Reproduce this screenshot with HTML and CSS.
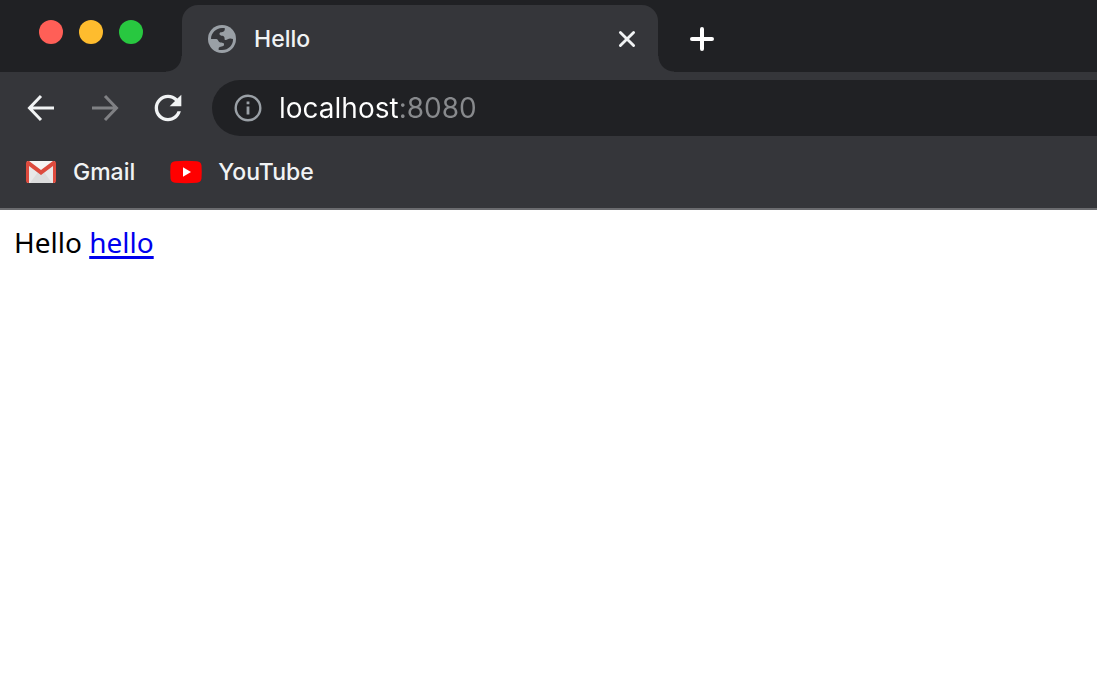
FILE: index.html
```html
<!DOCTYPE html>
<html lang="en">
<head>
    <meta charset="UTF-8">
    <meta name="viewport" content="width=device-width, initial-scale=1.0">
    <title>Hello</title>
    <link rel="stylesheet" href="styles.css">
</head>
<body>

    <header class="browser">
        <div class="tab-strip">
            <div class="window-controls">
                <button class="dot close" aria-label="Close window"></button>
                <button class="dot minimize" aria-label="Minimize window"></button>
                <button class="dot zoom" aria-label="Zoom window"></button>
            </div>

            <div class="tab">
                <svg class="tab-icon" viewBox="0 0 84 84">
                    <circle cx="42" cy="42" r="42" fill="#9aa0a6"/>
                    <path fill="#35363a" d="M9 42C9 24 24 9 42 9H50C52 18 46 22 38 22C33 24 33 31 40 32C50 32 50 38 50 44C58 48 60 36 75 42C76 60 62 75 42 75H32V69C34 63 48 66 48 60C50 52 42 55 35 52C29 48 32 42 22 42Z"/>
                </svg>
                <span class="tab-title">Hello</span>
                <button class="icon-btn tab-close" aria-label="Close tab">
                    <svg viewBox="0 0 20 20"><path d="M4 4L16 16M16 4L4 16" stroke="#f1f3f4" stroke-width="2.6" stroke-linecap="round"/></svg>
                </button>
            </div>

            <button class="icon-btn new-tab" aria-label="New tab">
                <svg viewBox="0 0 24 24"><path d="M2 12H22M12 2V22" stroke="#fff" stroke-width="4" stroke-linecap="round"/></svg>
            </button>
        </div>

        <div class="toolbar">
            <button class="icon-btn nav-btn" aria-label="Back">
                <svg viewBox="0 0 40 40"><path d="M34 20H10M21 8L9.500 20L21 32" fill="none" stroke="#f1f3f4" stroke-width="3"/></svg>
            </button>
            <button class="icon-btn nav-btn" aria-label="Forward">
                <svg viewBox="0 0 40 40"><path d="M8 20H32M21 8L32.500 20L21 32" fill="none" stroke="#808184" stroke-width="3"/></svg>
            </button>
            <button class="icon-btn nav-btn" aria-label="Reload">
                <svg viewBox="0 0 24 24"><path fill="#f1f3f4" d="M17.65 6.35C16.2 4.9 14.21 4 12 4c-4.42 0-7.99 3.58-7.99 8s3.57 8 7.99 8c3.73 0 6.84-2.55 7.73-6h-2.08c-.82 2.33-3.04 4-5.65 4-3.31 0-6-2.69-6-6s2.69-6 6-6c1.66 0 3.14.69 4.22 1.78L13 11h7V4l-2.35 2.35z"/></svg>
            </button>

            <div class="address-bar">
                <svg class="info-icon" viewBox="0 0 28 28">
                    <circle cx="14" cy="14" r="12.3" fill="none" stroke="#9aa0a6" stroke-width="2.4"/>
                    <path fill="#9aa0a6" d="M12.6 7.5h2.8v2.8h-2.8zM12.6 12.4h2.8v8.2h-2.8z"/>
                </svg>
                <input class="address" type="text" value="localhost:8080" aria-label="Address" spellcheck="false">
            </div>
        </div>

        <nav class="bookmarks">
            <a href="#gmail" class="bookmark">
                <svg class="bookmark-icon" viewBox="0 0 32 24">
                    <path fill="#e8e8e8" d="M2 1H30V23H2Z"/>
                    <path fill="#dcdcdc" d="M5 23L13 12L16 14L19 12L27 23Z"/>
                    <path fill="#f5f5f5" d="M4 1H28L16 10Z"/>
                    <path fill="#dd4b3e" d="M1 3Q1 1 3 1H4L16 10L28 1H29Q31 1 31 3V21Q31 23 29 23H28V6L16 15L4 6V23H3Q1 23 1 21Z"/>
                </svg>
                <span>Gmail</span>
            </a>
            <a href="#youtube" class="bookmark">
                <svg class="bookmark-icon" viewBox="0 0 32 24">
                    <path fill="#f00" d="M5 1.300Q16 .4 27 1.300Q31 1.600 31.500 5.500Q32 12 31.500 18.500Q31 22.400 27 22.700Q16 23.600 5 22.700Q1 22.400 .5 18.500Q0 12 .5 5.500Q1 1.600 5 1.300Z"/>
                    <path fill="#fff" d="M13 7.300L21 12L13 16.700Z"/>
                </svg>
                <span>YouTube</span>
            </a>
        </nav>
    </header>

    <main class="page">
        Hello <a href="#hello">hello</a>
    </main>

</body>
</html>
```
FILE: styles.css
```css
* {
    margin: 0;
    padding: 0;
    box-sizing: border-box;
}

body {
    font-family: Inter, Roboto, sans-serif;
    background: #fff;
    min-height: 100vh;
}

svg {
    display: block;
}

.browser {
    background: #35363a;
    border-bottom: 2px solid #6b6c6f;
}

/* Tab strip */
.tab-strip {
    display: flex;
    align-items: flex-end;
    height: 72px;
    background: #202124;
}

.window-controls {
    display: flex;
    gap: 16px;
    width: 182px;
    padding-left: 39px;
    padding-bottom: 28px;
}

.dot {
    width: 24px;
    height: 24px;
    border: none;
    border-radius: 50%;
}

.close {
    background: #ff5f57;
}

.minimize {
    background: #febc2e;
}

.zoom {
    background: #28c840;
}

.tab {
    position: relative;
    display: flex;
    align-items: center;
    width: 476px;
    height: 67px;
    padding: 0 20px 0 26px;
    background: #35363a;
    border-radius: 16px 16px 0 0;
}

/* Curved feet of the tab */
.tab::before,
.tab::after {
    content: "";
    position: absolute;
    bottom: 0;
    width: 16px;
    height: 16px;
}

.tab::before {
    right: 100%;
    background: radial-gradient(circle at 0 0, transparent 15px, #35363a 16px);
}

.tab::after {
    left: 100%;
    background: radial-gradient(circle at 100% 0, transparent 15px, #35363a 16px);
}

.tab-icon {
    width: 28px;
    height: 28px;
}

.tab-title {
    flex: 1;
    margin-left: 18px;
    color: #f1f3f4;
    font-size: 23px;
    font-weight: 500;
}

.icon-btn {
    display: flex;
    align-items: center;
    justify-content: center;
    background: none;
    border: none;
    cursor: pointer;
}

.tab-close svg {
    width: 22px;
    height: 22px;
}

.new-tab {
    width: 24px;
    height: 67px;
    margin-left: 32px;
}

.new-tab svg {
    width: 24px;
    height: 24px;
}

/* Toolbar */
.toolbar {
    display: flex;
    align-items: center;
    gap: 24px;
    padding: 8px 0 0 20px;
}

.nav-btn svg {
    width: 40px;
    height: 40px;
}

.address-bar {
    flex: 1;
    display: flex;
    align-items: center;
    gap: 17px;
    height: 56px;
    padding-left: 22px;
    background: #202124;
    border-radius: 28px 0 0 28px;
}

.info-icon {
    width: 28px;
    height: 28px;
}

/* Host is bright, port is dimmed */
.address {
    flex: 1;
    height: 40px;
    border: none;
    outline: none;
    color: #fff;
    font-family: inherit;
    font-size: 28px;
    background: linear-gradient(to right, #fff 120px, #888a8d 120px);
    -webkit-background-clip: text;
    background-clip: text;
    -webkit-text-fill-color: transparent;
}

/* Bookmarks */
.bookmarks {
    display: flex;
    gap: 35px;
    height: 72px;
    padding: 0 25px;
}

.bookmark {
    display: flex;
    align-items: center;
    gap: 16px;
    height: 72px;
    color: #f1f3f4;
    font-size: 23px;
    font-weight: 500;
    text-decoration: none;
}

.bookmark-icon {
    width: 32px;
    height: 24px;
}

/* Page content */
.page {
    padding: 12px 14px;
    color: #000;
    font-family: "Noto Sans", "Open Sans", sans-serif;
    font-size: 28px;
    line-height: 40px;
}

.page a {
    color: #00e;
    text-decoration-thickness: 3px;
    text-underline-offset: 3px;
}
```
